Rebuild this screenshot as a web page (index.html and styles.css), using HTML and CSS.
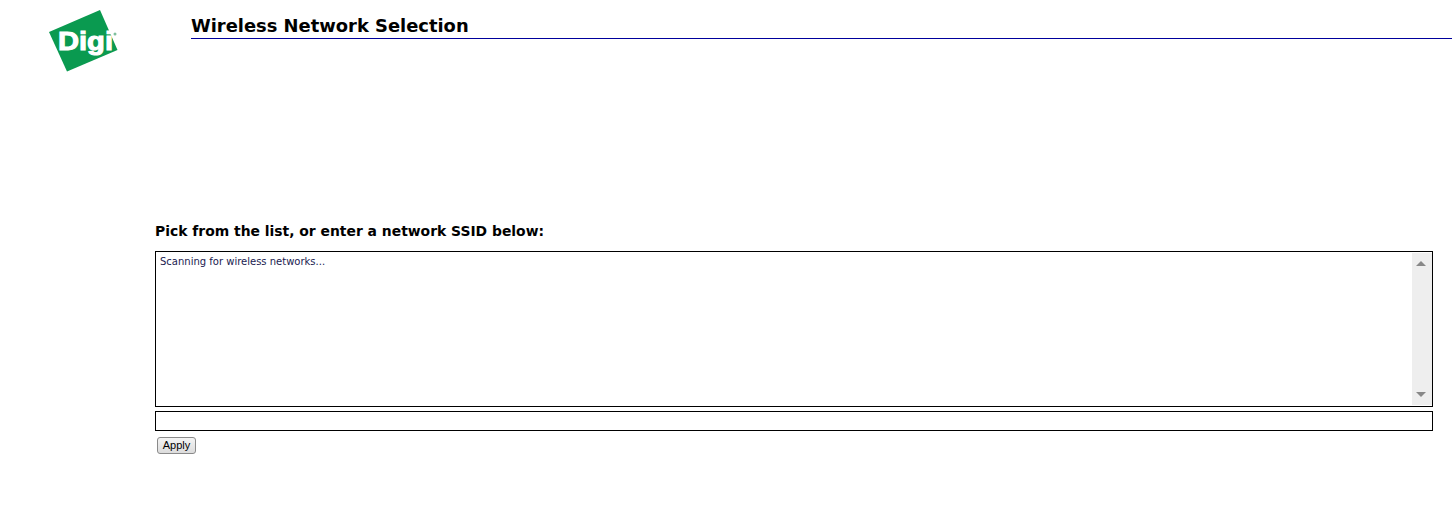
FILE: index.html

```html
<!DOCTYPE html>
<html lang="en">
<head>
    <meta charset="UTF-8">
    <title>Wireless Network Selection</title>
    <link rel="stylesheet" href="styles.css">
</head>
<body>
    <div class="header">
        <div class="logo">
            <svg width="191" height="80" viewBox="0 0 191 80">
                <polygon points="100,10 117.500,50 67,71.500 49,32" fill="#0a9a50"/>
                <text x="58" y="50" class="logo-text" textLength="55" lengthAdjust="spacingAndGlyphs">Digi</text>
                <circle cx="115" cy="34" r="1.500" fill="#7fbf9c"/>
            </svg>
        </div>
        <h1 class="title">Wireless Network Selection</h1>
    </div>

    <div class="content">
        <h2 class="pick">Pick from the list, or enter a network SSID below:</h2>
        <div class="network-list">
            <div class="network-text">Scanning for wireless networks...</div>
            <div class="scrollbar">
                <span class="arrow-up"></span>
                <span class="arrow-down"></span>
            </div>
        </div>
        <input type="text" class="ssid-input">
        <button type="button" class="apply-btn">Apply</button>
    </div>
</body>
</html>
```

FILE: styles.css

```css
body {
    font-family: "DejaVu Sans", Verdana, sans-serif;
    background: #fff;
    color: #000;
    margin: 0;
    padding: 0;
}

.header {
    display: flex;
    height: 80px;
}

.logo {
    width: 191px;
    flex-shrink: 0;
}

.logo svg {
    display: block;
}

.logo-text {
    font-family: "Liberation Sans", Arial, sans-serif;
    font-size: 25px;
    font-weight: bold;
    fill: #fff;
    stroke: #fff;
    stroke-width: 1px;
}

.title {
    flex: 1;
    height: 38px;
    margin: 0;
    font-size: 17.900px;
    line-height: 52px;
    font-weight: bold;
    border-bottom: 1px solid #00009c;
    overflow: hidden;
}

.content {
    padding: 142px 19px 0 155px;
}

.pick {
    margin: 0 0 10px 0;
    font-size: 13.900px;
    line-height: 19px;
    font-weight: bold;
}

.network-list {
    display: flex;
    height: 154px;
    border: 1px solid #000;
}

.network-text {
    flex: 1;
    padding: 3px 4px;
    font-size: 10px;
    line-height: 14px;
    color: #1a1a50;
}

.scrollbar {
    width: 20px;
    margin: 1px 0;
    background: #eee;
    display: flex;
    flex-direction: column;
    justify-content: space-between;
    align-items: center;
    padding: 8px 2px 8px 0;
    box-sizing: border-box;
}

.arrow-up {
    border-left: 5px solid transparent;
    border-right: 5px solid transparent;
    border-bottom: 5px solid #888;
}

.arrow-down {
    border-left: 5px solid transparent;
    border-right: 5px solid transparent;
    border-top: 5px solid #888;
}

.ssid-input {
    display: block;
    width: 100%;
    height: 20px;
    box-sizing: border-box;
    margin: 4px 0 0 0;
    border: 1px solid #000;
    padding: 0;
    outline: none;
}

.apply-btn {
    display: block;
    margin: 6px 0 0 2px;
    width: 39px;
    height: 17px;
    padding: 0 0 2px 0;
    font-family: "Liberation Sans", Arial, sans-serif;
    font-size: 11px;
    color: #000;
    background: linear-gradient(#f4f4f4, #dcdcdc);
    border: 1px solid #8a8a8a;
    border-radius: 3px;
}
```
